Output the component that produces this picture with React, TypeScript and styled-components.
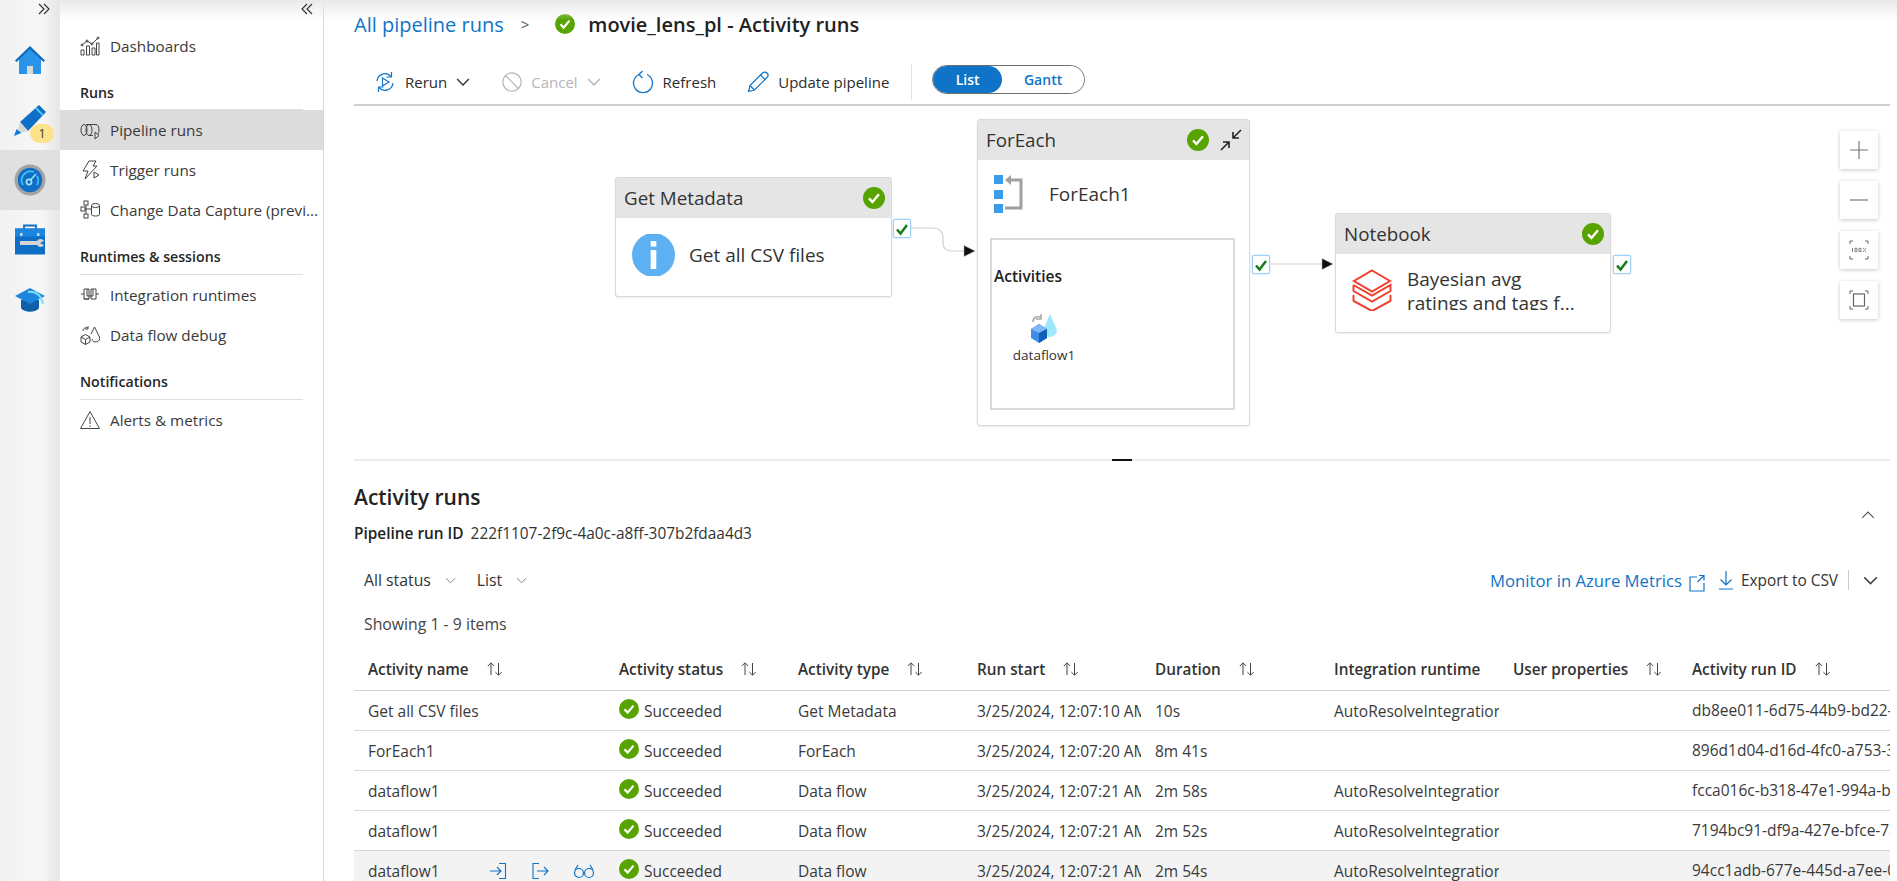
import React from "react";
import styled, { createGlobalStyle } from "styled-components";

const Global = createGlobalStyle`
  html, body { margin: 0; padding: 0; background: #fff; overflow: hidden; }
  body { font-family: "Open Sans", "Noto Sans", "Liberation Sans", sans-serif; color: #262626; }
  * { box-sizing: border-box; }
`;

const blue = "#0f74c8";

const Page = styled.div`
  position: relative;
  display: flex;
  width: 1897px;
  height: 881px;
  overflow: hidden;
`;
const TopShade = styled.div`
  position: absolute;
  left: 60px;
  right: 0;
  top: 0;
  height: 20px;
  background: linear-gradient(#e9e9e9, rgba(255,255,255,0));
  pointer-events: none;
`;
const Rail = styled.aside`
  width: 60px;
  flex: none;
  display: flex;
  flex-direction: column;
  background: linear-gradient(90deg, #f1f1f1 0, #f7f7f7 40px, #e6e6e6 60px);
`;
const RailToggle = styled.div`
  height: 30px;
  display: flex;
  justify-content: flex-end;
  padding: 2px 9px 0 0;
  color: #333;
`;
const RailItem = styled.div<{ $active?: boolean }>`
  position: relative;
  height: 60px;
  display: flex;
  align-items: center;
  justify-content: center;
  background: ${(p) => (p.$active ? "#e0e0e0" : "transparent")};
`;
const Badge = styled.span`
  position: absolute;
  left: 30px;
  top: 34px;
  width: 24px;
  height: 19px;
  border-radius: 10px;
  background: #fce38a;
  font-size: 12.5px;
  line-height: 19px;
  text-align: center;
  color: #333;
`;
const Nav = styled.nav`
  width: 264px;
  flex: none;
  border-right: 1px solid #d6d6d6;
  display: flex;
  flex-direction: column;
`;
const NavToggle = styled.div`
  position: relative;
  z-index: 1;
  height: 26px;
  display: flex;
  justify-content: flex-end;
  padding: 2px 9px 0 0;
  color: #333;
`;
const NavItem = styled.div<{ $active?: boolean }>`
  height: 40px;
  flex: none;
  display: flex;
  align-items: center;
  gap: 10px;
  padding-left: 20px;
  font-size: 15.25px;
  color: #3a3a3a;
  white-space: nowrap;
  background: ${(p) => (p.$active ? "#dcdcdc" : "transparent")};
  svg { flex: none; }
`;
const NavLabel = styled.div<{ $tight?: boolean }>`
  height: ${(p) => (p.$tight ? 44 : 45)}px;
  flex: none;
  margin: 0 20px;
  padding-bottom: ${(p) => (p.$tight ? 7 : 8)}px;
  display: flex;
  align-items: flex-end;
  font-size: 14.2px;
  font-weight: 600;
  color: #262626;
  border-bottom: 1px solid #dedede;
`;
const Main = styled.main`
  flex: 1;
  min-width: 0;
  padding-left: 30px;
  padding-right: 7px;
  display: flex;
  flex-direction: column;
`;
const Crumbs = styled.header`
  height: 48px;
  flex: none;
  display: flex;
  align-items: center;
  font-size: 20px;
`;
const CrumbLink = styled.span`
  color: ${blue};
`;
const CrumbSep = styled.span`
  color: #555;
  font-size: 15px;
  margin: 0 26px 0 17px;
`;
const CrumbTitle = styled.h1`
  margin: 0 0 0 13px;
  font-size: 20px;
  font-weight: 600;
  color: #222;
`;
const Toolbar = styled.div`
  height: 58px;
  flex: none;
  display: flex;
  align-items: center;
  padding: 12px 0 0 20px;
  border-bottom: 2px solid #cfcfcf;
`;
const ToolButton = styled.div<{ $disabled?: boolean; $gap?: number }>`
  display: flex;
  align-items: center;
  gap: 9px;
  font-size: 15px;
  color: ${(p) => (p.$disabled ? "#b5b5b5" : "#2b2b2b")};
  margin-right: ${(p) => p.$gap ?? 32}px;
  white-space: nowrap;
`;
const ToolDivider = styled.div`
  width: 1px;
  height: 36px;
  background: #e0e0e0;
  margin: 0 20px 0 22px;
`;
const Toggle = styled.div`
  width: 153px;
  height: 29px;
  margin-bottom: 5px;
  display: flex;
  border: 1px solid #6e6e6e;
  border-radius: 15px;
  overflow: hidden;
`;
const ToggleOption = styled.div<{ $on?: boolean }>`
  width: ${(p) => (p.$on ? 69 : 83)}px;
  display: flex;
  align-items: center;
  justify-content: center;
  font-size: 14px;
  font-weight: 600;
  color: ${(p) => (p.$on ? "#fff" : blue)};
  background: ${(p) => (p.$on ? blue : "#fff")};
  border-radius: 15px;
`;
const Canvas = styled.section`
  position: relative;
  height: 355px;
  flex: none;
  border-bottom: 2px solid #ececec;
`;
const Wires = styled.svg`
  position: absolute;
  left: 0;
  top: 0;
  width: 1536px;
  height: 353px;
`;
const Handle = styled.div`
  position: absolute;
  left: 758px;
  bottom: -2px;
  width: 20px;
  height: 2px;
  background: #111;
`;
const Card = styled.div<{ $x: number; $y: number; $w: number; $h: number }>`
  position: absolute;
  left: ${(p) => p.$x}px;
  top: ${(p) => p.$y}px;
  width: ${(p) => p.$w}px;
  height: ${(p) => p.$h}px;
  background: #fff;
  border: 1px solid #d9d9d9;
  border-radius: 3px;
  box-shadow: 0 1px 2px rgba(0,0,0,.08);
  display: flex;
  flex-direction: column;
`;
const CardHead = styled.div`
  height: 40px;
  flex: none;
  background: #e5e5e5;
  display: flex;
  align-items: center;
  gap: 5px;
  padding: 0 6px 0 8px;
  font-size: 18.8px;
  color: #333;
`;
const CardTitle = styled.span`
  flex: 1;
`;
const CardBody = styled.div<{ $top: number; $gap: number }>`
  display: flex;
  align-items: center;
  gap: ${(p) => p.$gap}px;
  padding: ${(p) => p.$top}px 0 0 16px;
  font-size: 19px;
  color: #333;
`;
const CardText = styled.div`
  line-height: 25px;
`;
const ClippedText = styled.div`
  align-self: flex-start;
  height: 43px;
  overflow: hidden;
  line-height: 24px;
  font-size: 19px;
  color: #333;
  margin-top: -2px;
`;
const Inner = styled.div`
  margin: 25px 14px 0 12px;
  height: 172px;
  border: 2px solid #d9d9d9;
  padding: 25px 0 0 2px;
`;
const InnerTitle = styled.div`
  font-size: 15.5px;
  font-weight: 600;
  color: #222;
`;
const InnerActivity = styled.div`
  width: 100px;
  margin: 26px 0 0 0;
  display: flex;
  flex-direction: column;
  align-items: center;
  gap: 3px;
  font-size: 13.5px;
  color: #333;
`;
const Port = styled.div<{ $x: number; $y: number }>`
  position: absolute;
  left: ${(p) => p.$x}px;
  top: ${(p) => p.$y}px;
  width: 18px;
  height: 19px;
  background: #fff;
  border: 1px solid #9fd0f5;
  box-shadow: 0 0 2px #9fd0f5;
  border-radius: 2px;
  display: flex;
  align-items: center;
  justify-content: center;
`;
const Zoomers = styled.div`
  position: absolute;
  left: 1486px;
  top: 25px;
  display: flex;
  flex-direction: column;
  gap: 12px;
`;
const ZoomButton = styled.div`
  width: 38px;
  height: 38px;
  background: #fff;
  box-shadow: 0 1px 4px rgba(0,0,0,.22);
  display: flex;
  align-items: center;
  justify-content: center;
`;
const Runs = styled.section`
  position: relative;
  flex: 1;
  min-height: 0;
  overflow: hidden;
`;
const RunsTitle = styled.h2`
  margin: 0;
  height: 54px;
  padding-top: 18px;
  font-size: 21px;
  line-height: 36px;
  font-weight: 600;
  color: #222;
  display: flex;
  align-items: center;
`;
const Collapse = styled.div`
  position: absolute;
  left: 1507px;
  top: 44px;
  color: #555;
`;
const RunId = styled.div`
  height: 36px;
  display: flex;
  align-items: center;
  gap: 7px;
  font-size: 15.4px;
  color: #333;
`;
const RunIdLabel = styled.span`
  font-weight: 600;
  color: #222;
`;
const FilterBar = styled.div`
  height: 30px;
  margin-top: 14px;
  display: flex;
  align-items: center;
  padding: 0 0 0 10px;
  font-size: 15.8px;
`;
const Filter = styled.div`
  display: flex;
  align-items: center;
  gap: 14px;
  margin-right: 21px;
  font-weight: 500;
  color: #333;
`;
const FilterRight = styled.div`
  margin-left: auto;
  display: flex;
  align-items: center;
  padding-right: 12px;
`;
const MetricsLink = styled.span`
  color: ${blue};
  font-size: 16.7px;
  margin-right: 7px;
`;
const ExportText = styled.span`
  color: #333;
  font-size: 15.4px;
  margin-left: 8px;
`;
const RightDivider = styled.span`
  width: 1px;
  height: 20px;
  background: #ccc;
  margin: 0 14px 0 10px;
`;
const Showing = styled.div`
  height: 20px;
  margin-top: 19px;
  padding-left: 10px;
  font-size: 15.8px;
  line-height: 20px;
  color: #444;
`;
const Row = styled.div<{ $head?: boolean; $hover?: boolean }>`
  display: grid;
  grid-template-columns: 251px 179px 179px 178px 179px 179px 179px 215px;
  height: ${(p) => (p.$head ? 43 : 40)}px;
  border-bottom: 1px solid ${(p) => (p.$head ? "#d4d4d4" : "#d9d9d9")};
  background: ${(p) => (p.$hover ? "#f3f3f3" : "transparent")};
  font-size: ${(p) => (p.$head ? 15.3 : 15.5)}px;
  font-weight: ${(p) => (p.$head ? 600 : 400)};
  color: ${(p) => (p.$head ? "#333" : "#3a3a3a")};
`;
const Table = styled.div`
  width: 1539px;
  margin-top: 14px;
`;
const Cell = styled.div<{ $raise?: boolean }>`
  display: flex;
  align-items: center;
  min-width: 0;
  overflow: hidden;
  white-space: nowrap;
  padding: 0 2px ${(p) => (p.$raise ? 2 : 0)}px 14px;
`;
const CellActions = styled.div`
  display: flex;
  align-items: center;
  gap: 24px;
  margin-left: 49px;
`;
const StatusMark = styled.span`
  display: inline-flex;
  margin-bottom: 4px;
`;
const StatusText = styled.span`
  margin-left: 5px;
`;
const SortMark = styled.span`
  display: inline-flex;
  margin-left: 17px;
`;

const Check = ({ size = 20 }: { size?: number }) => (
  <svg width={size} height={size} viewBox="0 0 20 20" style={{ flex: "none" }}>
    <circle cx="10" cy="10" r="10" fill="#57a300" />
    <path d="M5.5 10.3 8.6 13.6 14.5 6.6" fill="none" stroke="#fff" strokeWidth="2.2" />
  </svg>
);
const Chev = ({ size = 12, color = "currentColor", w = 1.2 }: { size?: number; color?: string; w?: number }) => (
  <svg width={size} height={size} viewBox="0 0 12 12" style={{ flex: "none" }}>
    <path d="M1 3.5 6 8.5 11 3.5" fill="none" stroke={color} strokeWidth={w} />
  </svg>
);
const Doubles = ({ right }: { right?: boolean }) => (
  <svg width="14" height="14" viewBox="0 0 14 14">
    <path
      d={right ? "M2 2 7 7 2 12M7 2 12 7 7 12" : "M12 2 7 7 12 12M7 2 2 7 7 12"}
      fill="none"
      stroke="currentColor"
      strokeWidth="1.2"
    />
  </svg>
);
const Sort = () => (
  <svg width="18" height="16" viewBox="0 0 18 16">
    <path d="M5 14V2M1.8 5 5 1.8 8.2 5M12.5 2V14M9.3 11 12.5 14.2 15.7 11" fill="none" stroke="#444" strokeWidth="1" />
  </svg>
);

const HomeIcon = () => (
  <svg width="32" height="32" viewBox="0 0 32 32">
    <path d="M5 15V30H27V15L16 5Z" fill="#2a94ea" />
    <path d="M13 22H19V30H13Z" fill="#d9d9d9" />
    <path d="M1 16.5 16 2 31 16.5 29.6 18 16 5.5 2.4 18Z" fill="#0f6cbd" />
  </svg>
);
const PencilIcon = () => (
  <svg width="32" height="32" viewBox="0 0 32 32">
    <path d="M6 18 25 1 32 8 14 27Z" fill="#0f6fc6" />
    <path d="M21 4.5 22.5 3.2 29.7 10.6 28.3 12Z" fill="#4cc3f0" />
    <path d="M6 18 14 27 3 30Z" fill="#d5d5d5" />
    <path d="M2.6 25 7.2 29 0 32Z" fill="#0f78d4" />
  </svg>
);
const MonitorIcon = () => (
  <svg width="32" height="32" viewBox="0 0 32 32">
    <circle cx="16" cy="16" r="15.5" fill="#a3a3a3" />
    <circle cx="16" cy="16" r="12.2" fill="#0f6fc6" />
    <path d="M9 21A9 9 0 0 1 20 8M23 12A9 9 0 0 1 23 21" fill="none" stroke="#4cc3f0" strokeWidth="1.6" />
    <circle cx="15" cy="18" r="2.6" fill="none" stroke="#9ee3fa" strokeWidth="1.6" />
    <path d="M16.5 16 22 10" stroke="#9ee3fa" strokeWidth="1.6" />
  </svg>
);
const ToolboxIcon = () => (
  <svg width="32" height="32" viewBox="0 0 32 32">
    <path d="M10 5V1.5H22V5" fill="none" stroke="#0f6fc6" strokeWidth="1.8" />
    <rect x="1" y="4.5" width="30" height="26" fill="#0f6fc6" />
    <rect x="1" y="4.5" width="30" height="8" fill="#1b86dc" />
    <path d="M6 9H8.5V12H6ZM23 9H25.5V12H23Z" fill="#b9d9f2" />
    <path d="M6 17H23A4 4 0 0 1 30 17L26 19 30 21A4 4 0 0 1 23 21H6Z" fill="#d5d5d5" />
  </svg>
);
const CapIcon = () => (
  <svg width="32" height="32" viewBox="0 0 32 32">
    <path d="M7 16V24C10 29 22 29 25 24V16Z" fill="#0f5fa8" />
    <path d="M1 12 16 4 31 12 16 20Z" fill="#1b86dc" />
    <path d="M14 8C22 7 27 11 29 20" fill="none" stroke="#7fdcf5" strokeWidth="2" />
  </svg>
);

const NavSvg = ({ children }: { children: React.ReactNode }) => (
  <svg width="20" height="20" viewBox="0 0 20 20" fill="none" stroke="#444" strokeWidth="1">
    {children}
  </svg>
);

const ForEachIcon = () => (
  <svg width="30" height="38" viewBox="0 0 30 38" style={{ flex: "none" }}>
    <path d="M0 0H9V9H0ZM0 15H9V24H0ZM0 29H9V38H0Z" fill="#3a9be8" />
    <path d="M17 5H27V33H11" fill="none" stroke="#a0a0a0" strokeWidth="3" />
    <path d="M11 5 17 0V10Z" fill="#a0a0a0" />
  </svg>
);
const InfoIcon = () => (
  <svg width="43" height="42" viewBox="0 0 43 42" style={{ flex: "none" }}>
    <ellipse cx="21.5" cy="21" rx="21.5" ry="22" fill="#5db1f3" />
    <rect x="18.7" y="16" width="5.6" height="19" fill="#fff" />
    <rect x="18.7" y="7" width="5.6" height="5.6" fill="#fff" />
  </svg>
);
const StackIcon = () => (
  <svg width="40" height="42" viewBox="0 0 40 42" style={{ flex: "none" }}>
    <path
      d="M20 1.5 38 12 20 22.5 2 12ZM1.5 16V22L20 32.5 38.5 22V16L20 26.5 1.5 16M1.5 26V32L20 42 38.5 32V26"
      fill="none"
      stroke="#f0402e"
      strokeWidth="2"
    />
  </svg>
);
const DataflowIcon = () => (
  <svg width="28" height="30" viewBox="0 0 28 30">
    <path d="M20 1 27 17A7 7 0 0 1 13 17Z" fill="#9be9fb" />
    <path d="M3 9C3 4 8 2 11 5M11 1V6H6" fill="none" stroke="#aaa" strokeWidth="1.6" />
    <path d="M1 16 9 11 17 16V25L9 30 1 25Z" fill="#3e8ee8" />
    <path d="M1 16 9 11 17 16 9 20Z" fill="#7fb6f5" />
    <path d="M9 20 17 16V25L9 30Z" fill="#0f5fb8" />
  </svg>
);
const PortCheck = () => (
  <svg width="14" height="14" viewBox="0 0 14 14">
    <path d="M2 7.5 5.5 11.5 12 3" fill="none" stroke="#107c10" strokeWidth="2.4" />
  </svg>
);

const rows = [
  { name: "Get all CSV files", type: "Get Metadata", start: "3/25/2024, 12:07:10 AM", dur: "10s", ir: "AutoResolveIntegrationRuntime", id: "db8ee011-6d75-44b9-bd22-7ad4f0a1c2e3" },
  { name: "ForEach1", type: "ForEach", start: "3/25/2024, 12:07:20 AM", dur: "8m 41s", ir: "", id: "896d1d04-d16d-4fc0-a753-3e8a91c07b12" },
  { name: "dataflow1", type: "Data flow", start: "3/25/2024, 12:07:21 AM", dur: "2m 58s", ir: "AutoResolveIntegrationRuntime", id: "fcca016c-b318-47e1-994a-b2d07c6e1f45" },
  { name: "dataflow1", type: "Data flow", start: "3/25/2024, 12:07:21 AM", dur: "2m 52s", ir: "AutoResolveIntegrationRuntime", id: "7194bc91-df9a-427e-bfce-7a10d2c85e36" },
  { name: "dataflow1", type: "Data flow", start: "3/25/2024, 12:07:21 AM", dur: "2m 54s", ir: "AutoResolveIntegrationRuntime", id: "94cc1adb-677e-445d-a7ee-0c3b58d6e921", hover: true },
];

const heads: [string, boolean][] = [
  ["Activity name", true],
  ["Activity status", true],
  ["Activity type", true],
  ["Run start", true],
  ["Duration", true],
  ["Integration runtime", false],
  ["User properties", true],
  ["Activity run ID", true],
];

export default function App() {
  return (
    <Page>
      <Global />
      <Rail>
        <RailToggle><Doubles right /></RailToggle>
        <RailItem><HomeIcon /></RailItem>
        <RailItem><PencilIcon /><Badge>1</Badge></RailItem>
        <RailItem $active><MonitorIcon /></RailItem>
        <RailItem><ToolboxIcon /></RailItem>
        <RailItem><CapIcon /></RailItem>
      </Rail>
      <Nav>
        <NavToggle><Doubles /></NavToggle>
        <NavItem>
          <NavSvg>
            <path d="M1 19V14H4V19ZM6.5 19V10H9.5V19ZM12 19V12H15V19ZM16.5 19V7H19V19Z" />
            <path d="M2 9 7 5 12 8 18 2" />
            <circle cx="2" cy="9" r="1" /><circle cx="7" cy="5" r="1" /><circle cx="12" cy="8" r="1" /><circle cx="18" cy="2" r="1" />
          </NavSvg>
          Dashboards
        </NavItem>
        <NavLabel $tight>Runs</NavLabel>
        <NavItem $active>
          <NavSvg>
            <ellipse cx="4" cy="10" rx="3" ry="5.5" />
            <ellipse cx="9" cy="10" rx="3" ry="5.5" />
            <path d="M6 4.5H16C18 4.5 19 7 19 10 19 12 18.5 13.5 17.5 14.5M9 15.5H13" />
            <path d="M15 12V19L19 15.5Z" />
          </NavSvg>
          Pipeline runs
        </NavItem>
        <NavItem>
          <NavSvg>
            <path d="M9 1H16L13 6H17L5 19 8 11H3Z" strokeLinejoin="round" />
            <path d="M14 12V18L19 15Z" fill="#fff" />
          </NavSvg>
          Trigger runs
        </NavItem>
        <NavItem>
          <NavSvg>
            <rect x="4" y="1" width="4" height="4" /><rect x="1" y="7" width="4" height="4" /><rect x="4" y="14" width="4" height="4" />
            <path d="M6 5V14M5 9H12" />
            <ellipse cx="15.5" cy="5.5" rx="4" ry="2" />
            <path d="M11.5 5.5V14.5C11.5 16.5 19.5 16.5 19.5 14.5V5.5" />
          </NavSvg>
          Change Data Capture (previ...
        </NavItem>
        <NavLabel>Runtimes &amp; sessions</NavLabel>
        <NavItem>
          <NavSvg>
            <path d="M1 9H4M16 9H19M4 4H9V14H4ZM4 14H9M11 4H16V14H11ZM7 4V11H13V4" />
          </NavSvg>
          Integration runtimes
        </NavItem>
        <NavItem>
          <NavSvg>
            <path d="M1 12 5.5 9.5 10 12V17L5.5 19.5 1 17ZM1 12 5.5 14.5 10 12M5.5 14.5V19.5" />
            <path d="M14.5 2 19.5 12A3.5 3.5 0 0 1 12 14M14.5 2 11 9" />
            <path d="M3 6C3 3 6 2 8 3M8 1V4H5" />
          </NavSvg>
          Data flow debug
        </NavItem>
        <NavLabel>Notifications</NavLabel>
        <NavItem>
          <NavSvg>
            <path d="M10 1.5 19.5 18.5H.5Z" />
            <path d="M10 7V14M10 15.5V17" />
          </NavSvg>
          Alerts &amp; metrics
        </NavItem>
      </Nav>
      <Main>
        <Crumbs>
          <CrumbLink>All pipeline runs</CrumbLink>
          <CrumbSep>&gt;</CrumbSep>
          <Check size={20} />
          <CrumbTitle>movie_lens_pl - Activity runs</CrumbTitle>
        </Crumbs>
        <Toolbar>
          <ToolButton $gap={32}>
            <svg width="22" height="22" viewBox="0 0 22 22" fill="none" stroke={blue} strokeWidth="1.2">
              <path d="M3 10A8 8 0 0 1 17 5.5M19 12A8 8 0 0 1 5 16.5" />
              <path d="M17.5 1V6H12.5M4.5 21V16H9.5" />
              <path d="M8.5 7V15L15 11Z" />
            </svg>
            Rerun
            <Chev size={14} color="#333" />
          </ToolButton>
          <ToolButton $disabled $gap={31}>
            <svg width="20" height="20" viewBox="0 0 20 20" fill="none" stroke="#b5b5b5" strokeWidth="1.2">
              <circle cx="10" cy="10" r="9.2" />
              <path d="M3.5 3.5 16.5 16.5" />
            </svg>
            Cancel
            <Chev size={14} color="#b5b5b5" />
          </ToolButton>
          <ToolButton $gap={31}>
            <svg width="22" height="24" viewBox="0 0 22 24" fill="none" stroke={blue} strokeWidth="1.3">
              <path d="M7 4.5A9.5 9.5 0 1 0 15 4.5" />
              <path d="M10.5 1 7 4.5 10.5 8" />
            </svg>
            Refresh
          </ToolButton>
          <ToolButton $gap={0}>
            <svg width="22" height="22" viewBox="0 0 22 22" fill="none" stroke={blue} strokeWidth="1.2">
              <path d="M1.5 20.5 3 14.5 15.5 2A2.2 2.2 0 0 1 20 6.5L7.5 19Z" />
              <path d="M3 14.5 7.5 19M13.5 4 18 8.5" />
            </svg>
            Update pipeline
          </ToolButton>
          <ToolDivider />
          <Toggle>
            <ToggleOption $on>List</ToggleOption>
            <ToggleOption>Gantt</ToggleOption>
          </Toggle>
        </Toolbar>
        <Canvas>
          <Wires viewBox="0 0 1536 353" fill="none">
            <path d="M557 122H578C586 122 589 126 589 132V137C589 142 592 145 598 145H610" stroke="#cfcfcf" strokeWidth="1.2" />
            <path d="M610 139.5 621 145 610 150.5Z" fill="#111" stroke="#aaa" strokeWidth=".5" />
            <path d="M917 158H968" stroke="#cfcfcf" strokeWidth="1.2" />
            <path d="M968 152.5 979 158 968 163.5Z" fill="#111" stroke="#aaa" strokeWidth=".5" />
          </Wires>
          <Card $x={261} $y={71} $w={277} $h={120}>
            <CardHead>
              <CardTitle>Get Metadata</CardTitle>
              <Check size={22} />
            </CardHead>
            <CardBody $top={16} $gap={14}>
              <InfoIcon />
              <CardText>Get all CSV files</CardText>
            </CardBody>
          </Card>
          <Port $x={539} $y={113}><PortCheck /></Port>
          <Card $x={623} $y={13} $w={273} $h={307}>
            <CardHead>
              <CardTitle>ForEach</CardTitle>
              <Check size={22} />
              <svg width="24" height="24" viewBox="0 0 24 24" fill="none" stroke="#222" strokeWidth="1.6" style={{ marginLeft: 5 }}>
                <path d="M22 2 14 10M14 4V10H20M2 22 10 14M4 14H10V20" />
              </svg>
            </CardHead>
            <CardBody $top={15} $gap={25}>
              <ForEachIcon />
              <CardText>ForEach1</CardText>
            </CardBody>
            <Inner>
              <InnerTitle>Activities</InnerTitle>
              <InnerActivity>
                <DataflowIcon />
                dataflow1
              </InnerActivity>
            </Inner>
          </Card>
          <Port $x={898} $y={149}><PortCheck /></Port>
          <Card $x={981} $y={107} $w={276} $h={120}>
            <CardHead>
              <CardTitle>Notebook</CardTitle>
              <Check size={22} />
            </CardHead>
            <CardBody $top={15} $gap={15}>
              <StackIcon />
              <ClippedText>
                Bayesian avg
                <br />
                ratings and tags f...
              </ClippedText>
            </CardBody>
          </Card>
          <Port $x={1259} $y={149}><PortCheck /></Port>
          <Zoomers>
            <ZoomButton>
              <svg width="20" height="20" viewBox="0 0 20 20"><path d="M10 1V19M1 10H19" stroke="#777" strokeWidth="1.2" /></svg>
            </ZoomButton>
            <ZoomButton>
              <svg width="20" height="20" viewBox="0 0 20 20"><path d="M1 10H19" stroke="#777" strokeWidth="1.2" /></svg>
            </ZoomButton>
            <ZoomButton>
              <svg width="20" height="20" viewBox="0 0 20 20" fill="none" stroke="#666" strokeWidth="1">
                <path d="M1 4V1H4M16 1H19V4M1 16V19H4M16 19H19V16" />
                <path d="M3.5 8V12M6 8.3H8V11.7H6ZM10 8.3H12V11.7H10ZM14 12 17 8M14 8.5H15M16 11.5H17" strokeWidth=".8" />
              </svg>
            </ZoomButton>
            <ZoomButton>
              <svg width="20" height="20" viewBox="0 0 20 20" fill="none" stroke="#666" strokeWidth="1">
                <path d="M1 4V1H4M16 1H19V4M1 16V19H4M16 19H19V16" />
                <rect x="4.5" y="4" width="11" height="12" strokeWidth="1.2" />
              </svg>
            </ZoomButton>
          </Zoomers>
          <Handle />
        </Canvas>
        <Runs>
          <RunsTitle>Activity runs</RunsTitle>
          <Collapse><svg width="14" height="14" viewBox="0 0 12 12"><path d="M1 8.5 6 3.5 11 8.5" fill="none" stroke="currentColor" strokeWidth="1" /></svg></Collapse>
          <RunId>
            <RunIdLabel>Pipeline run ID</RunIdLabel>
            222f1107-2f9c-4a0c-a8ff-307b2fdaa4d3
          </RunId>
          <FilterBar>
            <Filter>All status <Chev size={11} color="#777" w={1} /></Filter>
            <Filter>List <Chev size={11} color="#777" w={1} /></Filter>
            <FilterRight>
              <MetricsLink>Monitor in Azure Metrics</MetricsLink>
              <svg width="16" height="18" viewBox="0 0 16 18" fill="none" stroke={blue} strokeWidth="1.2" style={{ marginTop: 5 }}>
                <path d="M8 3H1V17H15V9M10 1.5H15V6.5M15 1.5 8.5 8" />
              </svg>
              <svg width="14" height="20" viewBox="0 0 14 20" fill="none" stroke={blue} strokeWidth="1.2" style={{ marginLeft: 14 }}>
                <path d="M7 1V15M1.5 9.5 7 15 12.5 9.5M0 19H14" />
              </svg>
              <ExportText>Export to CSV</ExportText>
              <RightDivider />
              <Chev size={15} color="#444" />
            </FilterRight>
          </FilterBar>
          <Showing>Showing 1 - 9 items</Showing>
          <Table>
            <Row $head>
              {heads.map(([h, s]) => (
                <Cell key={h}>
                  {h}
                  {s && <SortMark><Sort /></SortMark>}
                </Cell>
              ))}
            </Row>
            {rows.map((r, i) => (
              <Row key={i} $hover={r.hover}>
                <Cell>
                  {r.name}
                  {r.hover && (
                    <CellActions>
                      <svg width="18" height="18" viewBox="0 0 18 18" fill="none" stroke={blue} strokeWidth="1.1">
                        <path d="M1 9H12M8 5 12 9 8 13M10 1.5H16.5V16.5H10" />
                      </svg>
                      <svg width="18" height="18" viewBox="0 0 18 18" fill="none" stroke={blue} strokeWidth="1.1">
                        <path d="M8 1.5H2V16.5H8M6 9H17M13 5 17 9 13 13" />
                      </svg>
                      <svg width="22" height="18" viewBox="0 0 22 18" fill="none" stroke={blue} strokeWidth="1.2">
                        <circle cx="6" cy="11" r="4.5" /><circle cx="16" cy="11" r="4.5" />
                        <path d="M10.5 10H11.5M2 8 5 3M20 8 17 3" />
                      </svg>
                    </CellActions>
                  )}
                </Cell>
                <Cell><StatusMark><Check size={20} /></StatusMark><StatusText>Succeeded</StatusText></Cell>
                <Cell>{r.type}</Cell>
                <Cell>{r.start}</Cell>
                <Cell>{r.dur}</Cell>
                <Cell>{r.ir}</Cell>
                <Cell />
                <Cell $raise>{r.id}</Cell>
              </Row>
            ))}
          </Table>
        </Runs>
      </Main>
      <TopShade />
    </Page>
  );
}
